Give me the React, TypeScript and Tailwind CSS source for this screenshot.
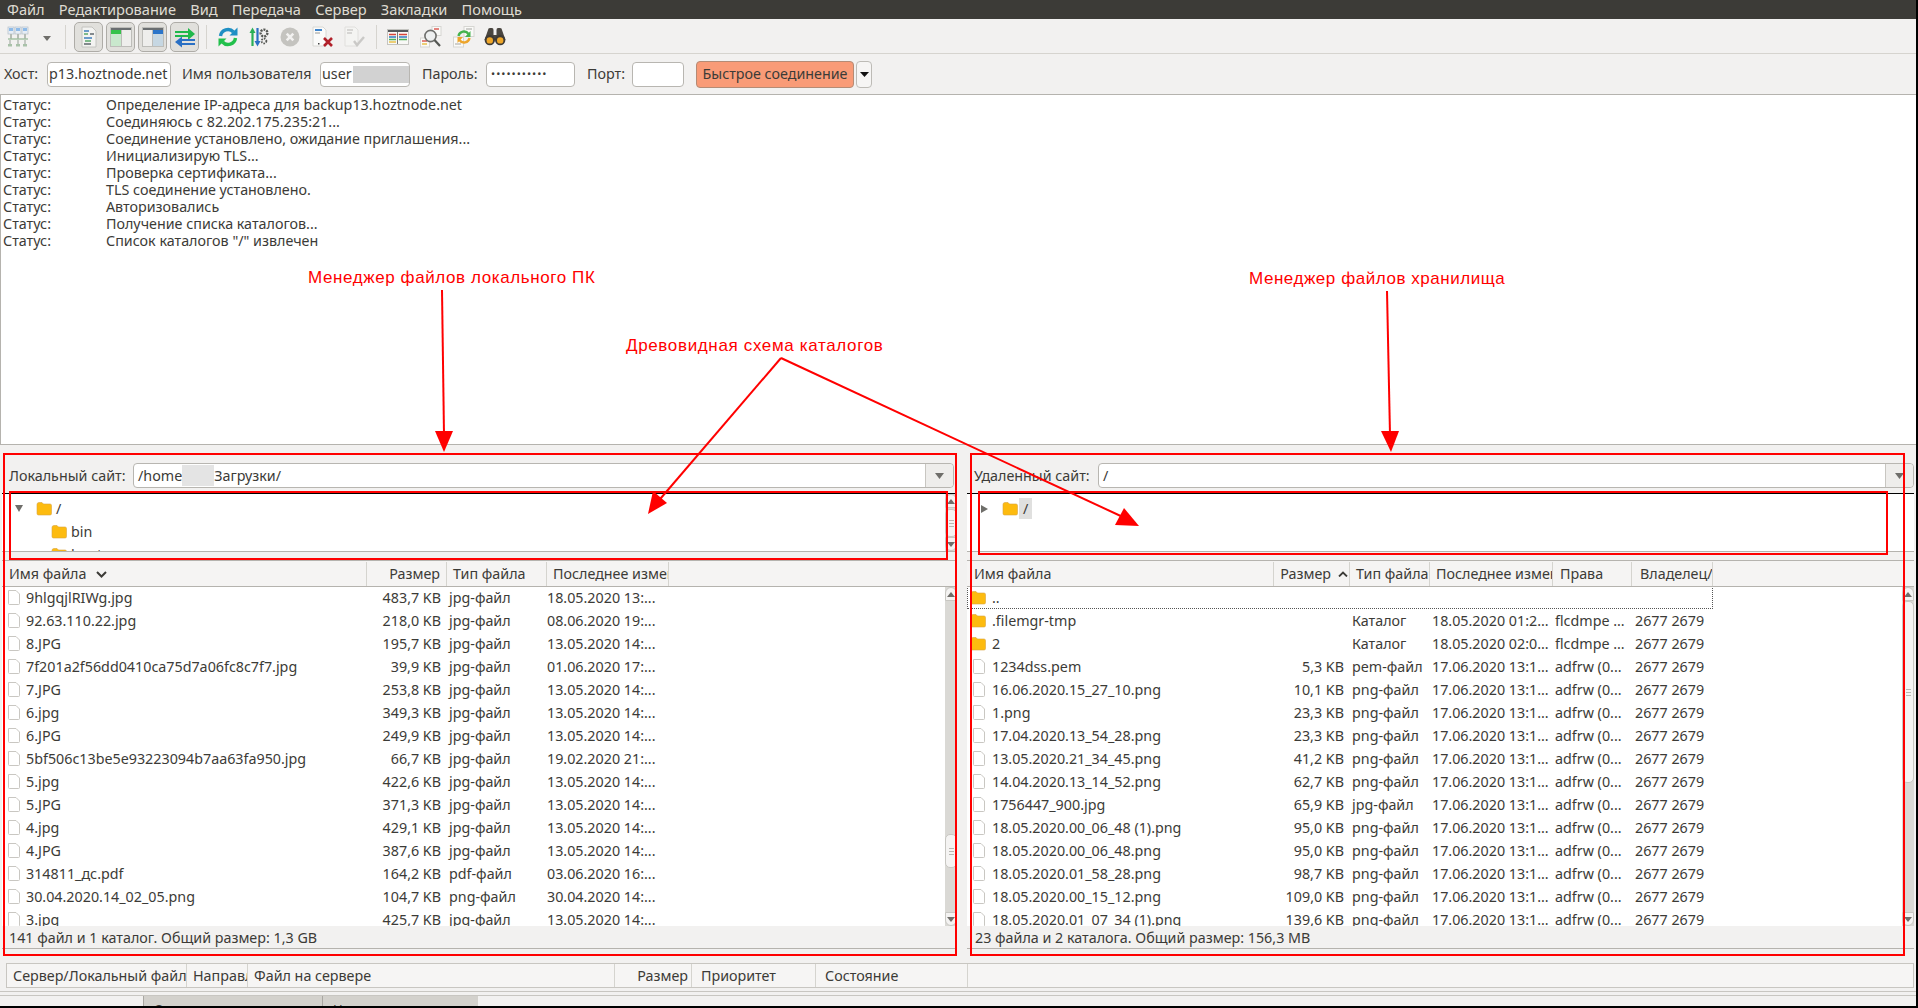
import React from "react";

const menus = ["Файл", "Редактирование", "Вид", "Передача", "Сервер", "Закладки", "Помощь"];

const logLines = [
  "Определение IP-адреса для backup13.hoztnode.net",
  "Соединяюсь с 82.202.175.235:21...",
  "Соединение установлено, ожидание приглашения...",
  "Инициализирую TLS...",
  "Проверка сертификата...",
  "TLS соединение установлено.",
  "Авторизовались",
  "Получение списка каталогов...",
  'Список каталогов "/" извлечен',
];

const localFiles = [
  ["9hlgqjlRIWg.jpg", "483,7 KB", "jpg-файл", "18.05.2020 13:..."],
  ["92.63.110.22.jpg", "218,0 KB", "jpg-файл", "08.06.2020 19:..."],
  ["8.JPG", "195,7 KB", "jpg-файл", "13.05.2020 14:..."],
  ["7f201a2f56dd0410ca75d7a06fc8c7f7.jpg", "39,9 KB", "jpg-файл", "01.06.2020 17:..."],
  ["7.JPG", "253,8 KB", "jpg-файл", "13.05.2020 14:..."],
  ["6.jpg", "349,3 KB", "jpg-файл", "13.05.2020 14:..."],
  ["6.JPG", "249,9 KB", "jpg-файл", "13.05.2020 14:..."],
  ["5bf506c13be5e93223094b7aa63fa950.jpg", "66,7 KB", "jpg-файл", "19.02.2020 21:..."],
  ["5.jpg", "422,6 KB", "jpg-файл", "13.05.2020 14:..."],
  ["5.JPG", "371,3 KB", "jpg-файл", "13.05.2020 14:..."],
  ["4.jpg", "429,1 KB", "jpg-файл", "13.05.2020 14:..."],
  ["4.JPG", "387,6 KB", "jpg-файл", "13.05.2020 14:..."],
  ["314811_дс.pdf", "164,2 KB", "pdf-файл", "03.06.2020 16:..."],
  ["30.04.2020.14_02_05.png", "104,7 KB", "png-файл", "30.04.2020 14:..."],
  ["3.jpg", "425,7 KB", "jpg-файл", "13.05.2020 14:..."],
];

const remoteFiles = [
  ["1234dss.pem", "5,3 KB", "pem-файл"],
  ["16.06.2020.15_27_10.png", "10,1 KB", "png-файл"],
  ["1.png", "23,3 KB", "png-файл"],
  ["17.04.2020.13_54_28.png", "23,3 KB", "png-файл"],
  ["13.05.2020.21_34_45.png", "41,2 KB", "png-файл"],
  ["14.04.2020.13_14_52.png", "62,7 KB", "png-файл"],
  ["1756447_900.jpg", "65,9 KB", "jpg-файл"],
  ["18.05.2020.00_06_48 (1).png", "95,0 KB", "png-файл"],
  ["18.05.2020.00_06_48.png", "95,0 KB", "png-файл"],
  ["18.05.2020.01_58_28.png", "98,7 KB", "png-файл"],
  ["18.05.2020.00_15_12.png", "109,0 KB", "png-файл"],
  ["18.05.2020.01_07_34 (1).png", "139,6 KB", "png-файл"],
];

function Folder({ className = "" }: { className?: string }) {
  return (
    <svg width="16" height="15" viewBox="0 0 16 15" className={"shrink-0 " + className}>
      <path d="M1 3.5 Q1 1.5 3 1.5 H6 L7.5 3 H14 Q15.5 3 15.5 4.5 V12.5 Q15.5 14 14 14 H2.5 Q1 14 1 12.5 Z" fill="#fdbb0f" stroke="#d9a441" strokeWidth="0.6" />
    </svg>
  );
}

function FileIcon() {
  return (
    <svg width="14" height="17" viewBox="0 0 14 17" className="shrink-0">
      <path d="M1.5 1.5 H9 L12.5 5 V14.5 Q12.5 15.5 11.5 15.5 H2.5 Q1.5 15.5 1.5 14.5 Z" fill="#fff" stroke="#c9c7c2" strokeWidth="1" />
    </svg>
  );
}

function SiteManagerIcon() {
  return (
    <svg width="22" height="22" viewBox="0 0 22 22">
      {[1, 8, 15].map((x) => (
        <g key={x}>
          <rect x={x} y="1" width="6" height="7" fill="#e6edf5" stroke="#b4bfc9" strokeWidth="0.7" />
          <rect x={x + 1} y="2" width="4" height="3" fill="#8fbbe8" />
          <rect x={x + 2} y="8" width="2" height="5" fill="#b5bcb5" />
        </g>
      ))}
      <path d="M1 13 H21" stroke="#9fbf9f" strokeWidth="1.4" />
      <path d="M3 14 V18 M11 14 V18 M18 14 V18" stroke="#a7b0a7" strokeWidth="1.2" />
      <rect x="1" y="18" width="4" height="2.5" fill="#a9c2a9" />
      <rect x="9" y="18" width="4" height="2.5" fill="#a9c2a9" />
      <rect x="16" y="18" width="4" height="2.5" fill="#a9c2a9" />
    </svg>
  );
}

function MessageLogIcon() {
  return (
    <svg width="20" height="22" viewBox="0 0 20 22">
      <path d="M3 1 H13 L17 5 V21 H3 Z" fill="#f3f3f1" stroke="#c4c4c0" />
      <path d="M5 5 H10 M5 12 H13" stroke="#3f7fbd" strokeWidth="1.5" />
      <path d="M5 8 H9 M6 15 H12" stroke="#59a86a" strokeWidth="1.5" />
      <path d="M5 18 H12 M11 8 H15" stroke="#60686e" strokeWidth="1.5" />
    </svg>
  );
}

function LocalTreeIcon() {
  return (
    <svg width="22" height="20" viewBox="0 0 22 20">
      <rect x="0.5" y="0.5" width="21" height="19" fill="#eeeeec" stroke="#bdbdb9" />
      <rect x="1" y="1" width="20" height="2" fill="#6a6e70" />
      <rect x="1" y="3" width="10" height="4" fill="#35c24a" />
      <rect x="1" y="7" width="10" height="12" fill="#c9e8cd" />
      <rect x="11" y="3" width="1" height="16" fill="#bdbdb9" />
    </svg>
  );
}

function RemoteTreeIcon() {
  return (
    <svg width="22" height="20" viewBox="0 0 22 20">
      <rect x="0.5" y="0.5" width="21" height="19" fill="#eeeeec" stroke="#bdbdb9" />
      <rect x="1" y="1" width="20" height="2" fill="#6a6e70" />
      <rect x="11" y="3" width="10" height="4" fill="#2a74c9" />
      <rect x="11" y="7" width="10" height="12" fill="#c6d7e2" />
      <rect x="10" y="3" width="1" height="16" fill="#bdbdb9" />
    </svg>
  );
}

function QueueIcon() {
  return (
    <svg width="22" height="22" viewBox="0 0 22 22">
      <path d="M1 6 H15 M1 10 H15" stroke="#1fb84a" strokeWidth="2" />
      <path d="M14 2 L21 8 L14 14 Z" fill="#1fb84a" />
      <path d="M21 14 H7 M21 18 H7" stroke="#2a70c4" strokeWidth="2" />
      <path d="M8 10.5 L1 16 L8 21.5 Z" fill="#2a70c4" />
    </svg>
  );
}

function RefreshIcon() {
  return (
    <svg width="22" height="22" viewBox="0 0 22 22" fill="none">
      <path d="M3.5 10 A7.5 7.5 0 0 1 16.5 6" stroke="#1f8fc4" strokeWidth="3.4" />
      <path d="M20.5 1.5 V9.5 H12.5 Z" fill="#1f8fc4" />
      <path d="M18.5 12 A7.5 7.5 0 0 1 5.5 16" stroke="#22c04c" strokeWidth="3.4" />
      <path d="M1.5 20.5 V12.5 H9.5 Z" fill="#22c04c" />
    </svg>
  );
}

function ProcessQueueIcon() {
  return (
    <svg width="20" height="22" viewBox="0 0 20 22" fill="none">
      <path d="M3.5 6 V20" stroke="#2aaf55" strokeWidth="2.2" />
      <path d="M0.5 7 L3.5 1.5 L6.5 7 Z" fill="#2aaf55" />
      <path d="M8.5 2 V16" stroke="#2a70c4" strokeWidth="2.2" />
      <path d="M5.5 15 L8.5 20.5 L11.5 15 Z" fill="#2a70c4" />
      <circle cx="15" cy="7" r="3.4" fill="none" stroke="#555753" strokeWidth="2.4" strokeDasharray="2 1" />
      <circle cx="15" cy="15" r="2.4" fill="none" stroke="#555753" strokeWidth="1.8" strokeDasharray="1.5 1" />
    </svg>
  );
}

function CancelIcon() {
  return (
    <svg width="20" height="20" viewBox="0 0 20 20">
      <circle cx="10" cy="10" r="9.5" fill="#c4c3bf" />
      <path d="M6.7 6.7 L13.3 13.3 M13.3 6.7 L6.7 13.3" stroke="#f2f1f0" strokeWidth="2.6" />
    </svg>
  );
}

function DisconnectIcon() {
  return (
    <svg width="22" height="22" viewBox="0 0 22 22">
      <path d="M1 1 H11 L14 4 V20 H1 Z" fill="#fbfbfa" stroke="#d8d8d4" />
      <path d="M3 4 H10" stroke="#3f85cc" strokeWidth="2" />
      <path d="M3 7 H8" stroke="#9a9a96" strokeWidth="1" />
      <rect x="6" y="17" width="1.5" height="1.5" fill="#444" />
      <path d="M12 12 L20 20 M20 12 L12 20" stroke="#b1202a" strokeWidth="2.6" />
    </svg>
  );
}

function ReconnectIcon() {
  return (
    <svg width="22" height="22" viewBox="0 0 22 22" fill="none" opacity="0.5">
      <path d="M1 1 H11 L14 4 V20 H1 Z" fill="#f7f7f5" stroke="#d0d0cc" />
      <path d="M3 4 H9 M3 7 H8" stroke="#a8a8a4" strokeWidth="1.4" />
      <path d="M10 15 L13 19 L20 11" stroke="#a3a39f" strokeWidth="2.4" />
    </svg>
  );
}

function FilterIcon() {
  return (
    <svg width="22" height="16" viewBox="0 0 22 16">
      <rect x="0.5" y="0.5" width="21" height="15" fill="#f8f8f6" stroke="#c4c4c0" />
      <rect x="1" y="1" width="20" height="2" fill="#55595c" />
      <path d="M2 5.5 H9 M12 5.5 H20" stroke="#d8453b" strokeWidth="1.3" />
      <path d="M2 8 H9 M12 8 H20" stroke="#2f7cc4" strokeWidth="1.3" />
      <path d="M2 10.5 H9 M12 10.5 H20" stroke="#4fb35a" strokeWidth="1.3" />
      <path d="M2 13 H9" stroke="#e7b62f" strokeWidth="1.3" />
      <path d="M10.5 3 V15" stroke="#55585a" strokeWidth="0.8" />
    </svg>
  );
}

function CompareIcon() {
  return (
    <svg width="22" height="22" viewBox="0 0 22 22" fill="none">
      <rect x="12" y="0.5" width="9" height="9" fill="#fafaf8" stroke="#d6d6d2" />
      <path d="M14 3 H19" stroke="#d8453b" strokeWidth="1.3" />
      <rect x="0.5" y="12" width="9" height="9" fill="#fafaf8" stroke="#d6d6d2" />
      <path d="M2 15 H7" stroke="#d8453b" strokeWidth="1.3" />
      <path d="M2 18 H7" stroke="#e7b62f" strokeWidth="1.3" />
      <circle cx="10.5" cy="10" r="5.6" fill="#eef0f0" stroke="#6e6f6c" strokeWidth="1.6" />
      <path d="M14.5 14 L20 20" stroke="#555753" strokeWidth="2.2" />
    </svg>
  );
}

function SyncIcon() {
  return (
    <svg width="22" height="22" viewBox="0 0 22 22" fill="none">
      <rect x="11" y="0.5" width="10" height="10" fill="#fafaf8" stroke="#d6d6d2" />
      <path d="M13 3 H19" stroke="#b8b8b4" strokeWidth="1.3" />
      <rect x="0.5" y="11" width="10" height="10" fill="#fafaf8" stroke="#d6d6d2" />
      <path d="M2 18 H8" stroke="#b8b8b4" strokeWidth="1.3" />
      <path d="M5.5 10 A5.5 5.5 0 0 1 15.5 8" stroke="#45b34e" strokeWidth="2.4" />
      <path d="M17.5 5 V11 H12 Z" fill="#45b34e" />
      <path d="M16.5 12 A5.5 5.5 0 0 1 6.5 14" stroke="#eda52b" strokeWidth="2.4" />
      <path d="M4.5 17 V11 H10 Z" fill="#eda52b" />
    </svg>
  );
}

function BinocularsIcon() {
  return (
    <svg width="22" height="20" viewBox="0 0 22 20">
      <path d="M4 3 Q4 1 6 1 H8 Q9.5 1 9.5 3 V8 H12.5 V3 Q12.5 1 14 1 H16 Q18 1 18 3 L21.5 13 H0.5 Z" fill="#4a4640" />
      <circle cx="5.8" cy="13" r="5.2" fill="#3f3b36" />
      <circle cx="16.2" cy="13" r="5.2" fill="#3f3b36" />
      <circle cx="5.8" cy="13.4" r="3.2" fill="#efa72a" />
      <circle cx="16.2" cy="13.4" r="3.2" fill="#efa72a" />
    </svg>
  );
}

function ToggleButton({ children }: { children: React.ReactNode }) {
  return (
    <div className="w-[29px] h-[30px] rounded-[5px] border border-[#aeaca7] bg-[#e1e0dc] flex items-center justify-center">
      {children}
    </div>
  );
}

function Arrow({ dir }: { dir: "up" | "down" }) {
  return (
    <svg width="8" height="5" viewBox="0 0 8 5">
      <path d={dir === "up" ? "M0 5 L4 0 L8 5 Z" : "M0 0 L8 0 L4 5 Z"} fill="#6f6e6a" />
    </svg>
  );
}

function Scrollbar({ thumbTop, thumbHeight }: { thumbTop: number; thumbHeight: number }) {
  return (
    <div className="w-[12px] shrink-0 flex flex-col bg-[#dad9d5]">
      <div className="h-[14px] bg-[#f4f3f2] border border-[#c8c7c2] rounded-t-full flex items-center justify-center shrink-0">
        <Arrow dir="up" />
      </div>
      <div className="flex-1 flex flex-col">
        <div className="shrink-0" style={{ height: thumbTop }} />
        <div
          className="shrink-0 bg-[#f5f4f3] border border-[#c8c7c2] rounded-[5px] flex flex-col gap-[2px] items-center justify-center"
          style={{ height: thumbHeight }}
        >
          <span className="w-[5px] h-px bg-[#b9b8b3]" />
          <span className="w-[5px] h-px bg-[#b9b8b3]" />
          <span className="w-[5px] h-px bg-[#b9b8b3]" />
        </div>
      </div>
      <div className="h-[14px] bg-[#f4f3f2] border border-[#c8c7c2] rounded-b-full flex items-center justify-center shrink-0">
        <Arrow dir="down" />
      </div>
    </div>
  );
}

function HeaderCell({ width, right, children }: { width: number; right?: boolean; children: React.ReactNode }) {
  return (
    <div
      className={
        "shrink-0 h-full border-r border-[#d5d4cf] overflow-hidden whitespace-nowrap flex items-center pl-[6px] " +
        (right ? "justify-end pr-[6px]" : "")
      }
      style={{ width }}
    >
      {children}
    </div>
  );
}

function Combo({ value }: { value: React.ReactNode }) {
  return (
    <div className="flex-1 h-[25px] rounded-[4px] border border-[#b8b6b1] bg-white flex items-stretch">
      <div className="flex-1 px-[4px] flex items-center text-[#3c3b37]">{value}</div>
      <div className="w-[28px] border-l border-[#c8c6c1] bg-[#eeedeb] rounded-r-[4px] flex items-center justify-center">
        <svg width="9" height="6" viewBox="0 0 9 6">
          <path d="M0 0 H9 L4.5 6 Z" fill="#6f6e6a" />
        </svg>
      </div>
    </div>
  );
}

function LocalPanel() {
  return (
    <div className="w-[955px] h-full flex flex-col">
      <div className="h-[48px] flex items-start pt-[18px] pl-[7px] pr-[3px] gap-[5px]">
        <span className="w-[119px] text-[#3c3b37] leading-[25px] whitespace-nowrap">Локальный сайт:</span>
        <Combo
          value={
            <>
              /home
              <span className="w-[32px] h-[21px] bg-[#e4e4e4]" />
              Загрузки/
            </>
          }
        />
      </div>
      <div className="h-[59px] border-t border-black border-b-[#b5b3ae] border-b bg-white flex">
        <div className="flex-1 text-[#3c3b37] overflow-hidden relative">
          <div className="h-[23px] flex items-center pl-[13px] mt-[3px]">
            <svg width="8" height="7" viewBox="0 0 8 7">
              <path d="M0 0 H8 L4 7 Z" fill="#6f6e6a" />
            </svg>
            <Folder className="ml-[13px]" />
            <span className="ml-[4px]">/</span>
          </div>
          <div className="h-[23px] flex items-center pl-[49px]">
            <Folder />
            <span className="ml-[4px]">bin</span>
          </div>
          <div className="h-[23px] flex items-center pl-[49px]">
            <Folder />
            <span className="ml-[4px]">boot</span>
          </div>
        </div>
        <Scrollbar thumbTop={1} thumbHeight={28} />
      </div>
      <div className="h-[8px] shrink-0" />
      <div className="flex-1 min-h-0 flex flex-col border-t border-[#b5b3ae]">
        <div className="h-[26px] shrink-0 flex border-b border-[#b5b3ae] bg-[#f5f4f3] text-[#3c3b37] pt-px">
          <div className="flex-1 flex">
            <HeaderCell width={365}>
              <span className="ml-px">Имя файла</span>
              <svg width="11" height="7" viewBox="0 0 11 7" className="ml-[10px]" fill="none">
                <path d="M1 1 L5.5 5.5 L10 1" stroke="#3c3b37" strokeWidth="2" />
              </svg>
            </HeaderCell>
            <HeaderCell width={80} right>
              Размер
            </HeaderCell>
            <HeaderCell width={100}>Тип файла</HeaderCell>
            <HeaderCell width={122}>Последнее изменение</HeaderCell>
          </div>
        </div>
        <div className="flex-1 min-h-0 flex bg-white">
          <div className="flex-1 overflow-hidden text-[#3c3b37]">
            <div className="-mt-px">
              {localFiles.map((f) => (
                <div key={f[0]} className="h-[23px] flex items-center whitespace-nowrap">
                  <div className="w-[365px] shrink-0 flex items-center gap-[5px] pl-[5px]">
                    <FileIcon />
                    {f[0]}
                  </div>
                  <div className="w-[74px] shrink-0 text-right">{f[1]}</div>
                  <div className="w-[98px] shrink-0 pl-[8px]">{f[2]}</div>
                  <div className="pl-[8px]">{f[3]}</div>
                </div>
              ))}
            </div>
          </div>
          <Scrollbar thumbTop={233} thumbHeight={34} />
        </div>
      </div>
      <div className="h-[23px] shrink-0 border-b border-[#b5b3ae] flex items-center pl-[7px] pt-px text-[#3c3b37]">
        141 файл и 1 каталог. Общий размер: 1,3 GB
      </div>
    </div>
  );
}

function RemotePanel() {
  return (
    <div className="flex-1 h-full flex flex-col">
      <div className="h-[48px] flex items-start pt-[18px] pl-[7px] gap-[5px]">
        <span className="w-[119px] text-[#3c3b37] leading-[25px] whitespace-nowrap">Удаленный сайт:</span>
        <Combo value="/" />
      </div>
      <div className="h-[59px] border-t border-black border-b-[#b5b3ae] border-b bg-white text-[#3c3b37]">
        <div className="h-[23px] flex items-center pl-[14px] mt-[3px]">
          <svg width="7" height="8" viewBox="0 0 7 8">
            <path d="M0 0 V8 L7 4 Z" fill="#6f6e6a" />
          </svg>
          <Folder className="ml-[14px]" />
          <span className="bg-[#e0e0df] px-[4px] ml-px">/</span>
        </div>
      </div>
      <div className="h-[8px] shrink-0" />
      <div className="flex-1 min-h-0 flex flex-col border-t border-[#b5b3ae]">
        <div className="h-[26px] shrink-0 flex border-b border-[#b5b3ae] bg-[#f5f4f3] text-[#3c3b37] pt-px">
          <HeaderCell width={307}>
            <span className="ml-px">Имя файла</span>
          </HeaderCell>
          <HeaderCell width={76}>
            <span className="flex-1 text-right">Размер</span>
            <svg width="10" height="6" viewBox="0 0 10 6" className="ml-[7px] mr-px shrink-0" fill="none">
              <path d="M1 5.5 L5 1.5 L9 5.5" stroke="#3c3b37" strokeWidth="1.8" />
            </svg>
          </HeaderCell>
          <HeaderCell width={80}>Тип файла</HeaderCell>
          <HeaderCell width={123}>Последнее изменение</HeaderCell>
          <HeaderCell width={79}>
            <span className="ml-px">Права</span>
          </HeaderCell>
          <HeaderCell width={81}>
            <span className="ml-[2px]">Владелец/Группа</span>
          </HeaderCell>
        </div>
        <div className="flex-1 min-h-0 flex bg-white">
          <div className="flex-1 overflow-hidden text-[#3c3b37]">
            <div className="-mt-px">
              <div className="h-[23px] w-[746px] border border-dotted border-[#555] flex items-center pl-[2px]">
                <Folder className="mr-[6px]" />
                ..
              </div>
              {[
                [".filemgr-tmp", "18.05.2020 01:2..."],
                ["2", "18.05.2020 02:0..."],
              ].map((f) => (
                <div key={f[0]} className="h-[23px] flex items-center whitespace-nowrap">
                  <div className="w-[385px] shrink-0 flex items-center pl-[3px]">
                    <Folder className="mr-[6px]" />
                    {f[0]}
                  </div>
                  <div className="w-[80px] shrink-0">Каталог</div>
                  <div className="w-[123px] shrink-0">{f[1]}</div>
                  <div className="w-[80px] shrink-0">flcdmpe ...</div>
                  <div>2677 2679</div>
                </div>
              ))}
              {remoteFiles.map((f) => (
                <div key={f[0]} className="h-[23px] flex items-center whitespace-nowrap">
                  <div className="w-[306px] shrink-0 flex items-center gap-[6px] pl-[5px]">
                    <FileIcon />
                    {f[0]}
                  </div>
                  <div className="w-[71px] shrink-0 text-right">{f[1]}</div>
                  <div className="w-[88px] shrink-0 pl-[8px]">{f[2]}</div>
                  <div className="w-[123px] shrink-0">17.06.2020 13:1...</div>
                  <div className="w-[80px] shrink-0">adfrw (0...</div>
                  <div>2677 2679</div>
                </div>
              ))}
            </div>
          </div>
          <Scrollbar thumbTop={0} thumbHeight={182} />
        </div>
      </div>
      <div className="h-[23px] shrink-0 border-b border-[#b5b3ae] flex items-center pl-[8px] pt-px text-[#3c3b37]">
        23 файла и 2 каталога. Общий размер: 156,3 MB
      </div>
    </div>
  );
}

export default function App() {
  return (
    <div className="relative w-[1918px] h-[1008px] overflow-hidden bg-[#f2f1f0] flex flex-col font-['Noto_Sans',sans-serif] text-[14.3px] text-[#3c3b37] border-r-2 border-black">
      {/* Menu */}
      <div className="h-[19px] shrink-0 bg-[#3c3b37] text-[#dfdbd2] text-[14.6px] flex items-center pl-[7px] gap-[14.2px] whitespace-nowrap">
        {menus.map((m) => (
          <span key={m}>{m}</span>
        ))}
      </div>

      {/* Toolbar */}
      <div className="h-[35px] shrink-0 border-b border-[#d6d4cf] flex items-center pl-[7px] pt-px">
        <SiteManagerIcon />
        <svg width="8" height="5" viewBox="0 0 8 5" className="ml-[14px] mt-[3px]">
          <path d="M0 0 H8 L4 5 Z" fill="#6f6e6a" />
        </svg>
        <div className="w-px h-[24px] bg-[#d6d4cf] ml-[14px]" />
        <div className="flex gap-[3px] ml-[8px]">
          <ToggleButton>
            <MessageLogIcon />
          </ToggleButton>
          <ToggleButton>
            <LocalTreeIcon />
          </ToggleButton>
          <ToggleButton>
            <RemoteTreeIcon />
          </ToggleButton>
          <ToggleButton>
            <QueueIcon />
          </ToggleButton>
        </div>
        <div className="w-px h-[24px] bg-[#d6d4cf] ml-[7px]" />
        <div className="ml-[10px]">
          <RefreshIcon />
        </div>
        <div className="ml-[10px]">
          <ProcessQueueIcon />
        </div>
        <div className="ml-[11px]">
          <CancelIcon />
        </div>
        <div className="ml-[12px]">
          <DisconnectIcon />
        </div>
        <div className="ml-[10px]">
          <ReconnectIcon />
        </div>
        <div className="w-px h-[24px] bg-[#d6d4cf] ml-[10px]" />
        <div className="ml-[10px]">
          <FilterIcon />
        </div>
        <div className="ml-[11px]">
          <CompareIcon />
        </div>
        <div className="ml-[11px]">
          <SyncIcon />
        </div>
        <div className="ml-[9px]">
          <BinocularsIcon />
        </div>
      </div>

      {/* Quick connect */}
      <div className="h-[41px] shrink-0 border-b border-[#b5b3ae] flex items-center pl-[4px] whitespace-nowrap">
        <span className="w-[43px]">Хост:</span>
        <div className="w-[124px] h-[25px] border border-[#b8b6b1] rounded-[4px] bg-white flex items-center pl-[1px] overflow-hidden">
          p13.hoztnode.net
        </div>
        <span className="w-[130px] ml-[11px]">Имя пользователя</span>
        <div className="w-[90px] h-[25px] border border-[#b8b6b1] rounded-[4px] bg-white flex items-center pl-[1px] ml-[8px] overflow-hidden">
          user
          <span className="ml-[1px] w-[58px] h-[17px] bg-[#d2d2d2] shrink-0" />
        </div>
        <span className="w-[56px] ml-[12px]">Пароль:</span>
        <div className="w-[89px] h-[25px] border border-[#b8b6b1] rounded-[4px] bg-white flex items-center pl-[4px] ml-[8px] overflow-hidden text-[11px] tracking-[1px]">
          •••••••••••
        </div>
        <span className="w-[38px] ml-[12px]">Порт:</span>
        <div className="w-[52px] h-[25px] border border-[#b8b6b1] rounded-[4px] bg-white ml-[7px]" />
        <div className="w-[158px] h-[27px] ml-[12px] border border-[#b58b75] rounded-[4px] bg-[#f99b77] flex items-center justify-center">
          Быстрое соединение
        </div>
        <div className="w-[16px] h-[27px] ml-[2px] border border-[#bdbbb6] rounded-[4px] bg-[#f6f5f4] flex items-center justify-center">
          <svg width="9" height="5" viewBox="0 0 9 5">
            <path d="M0 0 H9 L4.5 5 Z" fill="#111" />
          </svg>
        </div>
      </div>

      {/* Message log */}
      <div className="h-[350px] shrink-0 bg-white border-l border-b border-[#b5b3ae] pt-[1px] pl-[2px]">
        {logLines.map((l) => (
          <div key={l} className="h-[17px] flex items-center whitespace-nowrap">
            <span className="w-[103px] shrink-0">Статус:</span>
            {l}
          </div>
        ))}
      </div>

      {/* Panels */}
      <div className="h-[504px] shrink-0 flex pl-[2px] pr-[2px]">
        <LocalPanel />
        <div className="w-[10px] shrink-0" />
        <RemotePanel />
      </div>

      {/* Queue */}
      <div className="mt-[14px] h-[25px] shrink-0 flex ml-[6px] mr-[2px] border border-[#c8c6c1] bg-[#f6f5f4]">
        <HeaderCell width={180}>Сервер/Локальный файл</HeaderCell>
        <HeaderCell width={61}>Направление</HeaderCell>
        <HeaderCell width={367}>Файл на сервере</HeaderCell>
        <HeaderCell width={77} right>
          <span className="-mr-[3px]">Размер</span>
        </HeaderCell>
        <HeaderCell width={124}>
          <span className="ml-[3px]">Приоритет</span>
        </HeaderCell>
        <HeaderCell width={152}>
          <span className="ml-[3px]">Состояние</span>
        </HeaderCell>
      </div>
      <div className="h-[4px] shrink-0 border-b border-[#c8c6c1]" />
      <div className="h-[4px] shrink-0 border-b border-[#c8c6c1]" />
      <div className="h-[10px] shrink-0 flex pl-[143px] overflow-hidden text-[13px] leading-[16px]">
        <div className="w-[179px] bg-[#d3d1cc] border-l border-[#a9a7a2] pl-[10px] pt-[5px]">Очередь</div>
        <div className="w-[156px] bg-[#d3d1cc] border-l border-[#a9a7a2] pl-[10px] pt-[5px]">Неудачные</div>
      </div>
      <div className="flex-1 bg-black" />

      {/* Annotations over the window */}
      <span className="absolute left-[308px] top-[267px] text-[17px] leading-[22px] text-[#ff0000] font-['Liberation_Sans',sans-serif] tracking-[0.6px] whitespace-nowrap">
        Менеджер файлов локального ПК
      </span>
      <span className="absolute left-[1249px] top-[268px] text-[17px] leading-[22px] text-[#ff0000] font-['Liberation_Sans',sans-serif] tracking-[0.55px] whitespace-nowrap">
        Менеджер файлов хранилища
      </span>
      <span className="absolute left-[626px] top-[335px] text-[17px] leading-[22px] text-[#ff0000] font-['Liberation_Sans',sans-serif] tracking-[0.65px] whitespace-nowrap">
        Древовидная схема каталогов
      </span>
      <svg className="absolute left-0 top-0 pointer-events-none" width="1918" height="1008" viewBox="0 0 1918 1008" fill="none">
        <g stroke="#ff0000" strokeWidth="2">
          <rect x="4" y="454" width="952" height="501" />
          <rect x="10" y="492" width="937" height="67" />
          <rect x="971" y="454" width="933" height="501" />
          <rect x="979" y="492" width="908" height="62" />
          <path d="M442 290 L444 435" />
          <path d="M1387 291 L1390 435" />
          <path d="M781 358 L655 505" />
          <path d="M781 358 L1125 518" />
        </g>
        <path d="M435 431 H453 L444 452 Z" fill="#ff0000" />
        <path d="M1381 431 H1399 L1391 452 Z" fill="#ff0000" />
        <path d="M648 514 L653 491 L667 503 Z" fill="#ff0000" />
        <path d="M1139 526 L1124 508 L1115 525 Z" fill="#ff0000" />
      </svg>
    </div>
  );
}
